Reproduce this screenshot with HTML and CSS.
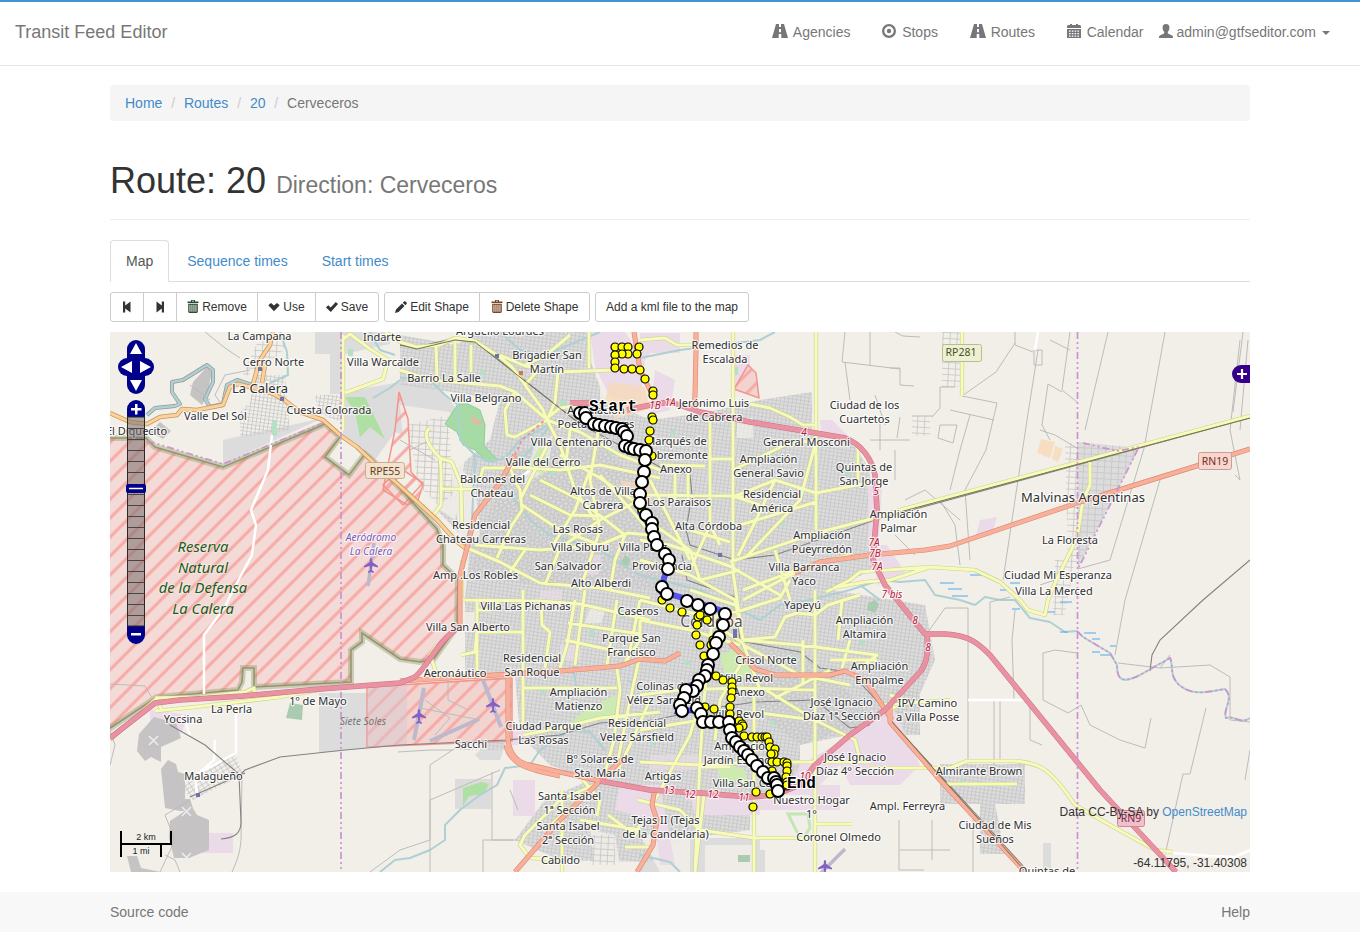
FILE: index.html
```html
<!DOCTYPE html>
<html lang="en">
<head>
<meta charset="utf-8">
<title>Transit Feed Editor</title>
<link rel="stylesheet" href="styles.css">
</head>
<body>
<svg class="sprite" aria-hidden="true">
  <symbol id="i-road" viewBox="0 0 16 14"><path d="M4 0h3v3h2V0h3l4 14H9.300v-4H6.700v4H0zM7 5v3.300h2V5z"/></symbol>
  <symbol id="i-record" viewBox="0 0 14 14"><path fill-rule="evenodd" d="M7 0a7 7 0 1 1 0 14A7 7 0 0 1 7 0zm0 2.300a4.700 4.700 0 1 0 0 9.400 4.700 4.700 0 0 0 0-9.400z"/><circle cx="7" cy="7" r="2.200"/></symbol>
  <symbol id="i-cal" viewBox="0 0 14 14"><path d="M1 1h2V0h2v1h4V0h2v1h2l1 1v2H0V2z"/><path fill-rule="evenodd" d="M0 5h14v9H0zm2 1.500v1.300h1.600V6.500zm2.800 0v1.300h1.600V6.500zm2.800 0v1.300h1.600V6.500zm2.800 0v1.300H12V6.500zM2 9v1.300h1.600V9zm2.800 0v1.300h1.600V9zm2.800 0v1.300h1.600V9zm2.800 0v1.300H12V9zM2 11.500v1.200h1.600v-1.200zm2.800 0v1.200h1.600v-1.200zm2.800 0v1.200h1.600v-1.200zm2.800 0v1.200H12v-1.200z"/></symbol>
  <symbol id="i-user" viewBox="0 0 14 14"><path d="M7 0c2.400 0 3.500 1.600 3.400 3.800C10.300 6 9.500 7.200 8.700 8c0 1.500.5 1.700 2.300 2.400 1.800.8 3 1.200 3 2.400V14H0v-1.200c0-1.200 1.200-1.600 3-2.400C4.800 9.700 5.300 9.500 5.300 8 4.500 7.200 3.700 6 3.600 3.800 3.500 1.600 4.600 0 7 0z"/></symbol>
  <symbol id="i-first" viewBox="0 0 12 12"><path d="M2 0.500h2.200v4L9.500 0.500v11L4.200 7.500v4H2z"/></symbol>
  <symbol id="i-last" viewBox="0 0 12 12"><path d="M10 0.500H7.800v4L2.500 0.500v11l5.300-4v4H10z"/></symbol>
  <symbol id="i-trash" viewBox="0 0 12 13"><path fill-rule="evenodd" d="M4 0h4v1.500h3.500V3H.5V1.500H4zm1 .8v.8h2V.8zM1.200 3.800h9.600V12l-1 1H2.200l-1-1zM2.500 4.800v7h.9v-7zm2 0v7h.9v-7zm2 0v7h.9v-7zm2 0v7h.9v-7z"/></symbol>
  <symbol id="i-down" viewBox="0 0 12 12"><path d="M.3 4.300 3 2l3 2.600L9 2l2.700 2.300L6 10.300z"/></symbol>
  <symbol id="i-ok" viewBox="0 0 12 12"><path d="M0 6.500 2.200 4.200 4.700 6.600 9.800 1 12 3 4.800 11z"/></symbol>
  <symbol id="i-pencil" viewBox="0 0 12 12"><path d="M0 12l1-3.600L7 2.500l2.500 2.500L3.500 11zM7.800 1.700 9 .5c.5-.5 1-.5 1.500 0l1 1c.5.5.5 1 0 1.500l-1.200 1.200z"/></symbol>
</svg>

<nav class="navbar">
  <a class="brand">Transit Feed Editor</a>
  <div class="nav">
    <a><svg class="ico wide"><use href="#i-road"/></svg>Agencies</a>
    <a><svg class="ico"><use href="#i-record"/></svg>Stops</a>
    <a><svg class="ico wide"><use href="#i-road"/></svg>Routes</a>
    <a><svg class="ico"><use href="#i-cal"/></svg>Calendar</a>
    <a class="account"><svg class="ico"><use href="#i-user"/></svg>admin@gtfseditor.com<i class="caret"></i></a>
  </div>
</nav>

<main class="container">
  <ol class="breadcrumb"><li><a>Home</a></li><li><a>Routes</a></li><li><a>20</a></li><li>Cerveceros</li></ol>
  <h1>Route: 20 <small>Direction: Cerveceros</small></h1>
  <ul class="tabs"><li class="active">Map</li><li>Sequence times</li><li>Start times</li></ul>
  <div class="toolbar">
    <div class="group">
      <button class="w34"><svg class="bi"><use href="#i-first"/></svg></button>
      <button class="w34"><svg class="bi"><use href="#i-last"/></svg></button>
      <button class="w82"><svg class="bi trash green"><use href="#i-trash"/></svg>Remove</button>
      <button class="w59"><svg class="bi"><use href="#i-down"/></svg>Use</button>
      <button class="w64"><svg class="bi"><use href="#i-ok"/></svg>Save</button>
    </div>
    <div class="group">
      <button class="w96"><svg class="bi pencil"><use href="#i-pencil"/></svg>Edit Shape</button>
      <button class="w111"><svg class="bi trash orange"><use href="#i-trash"/></svg>Delete Shape</button>
    </div>
    <div class="group"><button class="w154">Add a kml file to the map</button></div>
  </div>

  <div class="map">
    <svg class="canvas" viewBox="110 332 1140 540" width="1140" height="540">
      <defs>
        <pattern id="hatch" width="13.400" height="13.400" patternUnits="userSpaceOnUse" patternTransform="rotate(45)"><path d="M2 0v13.400" stroke="#f7a9a5" stroke-width="3"/></pattern>
        <pattern id="grid" width="4" height="3.600" patternUnits="userSpaceOnUse" patternTransform="rotate(8)"><path d="M0 .5h4M.5 0v3.600" stroke="#c5c5c5" stroke-width=".75"/></pattern>
        <pattern id="grid2" width="5" height="4" patternUnits="userSpaceOnUse" patternTransform="rotate(-32)"><path d="M0 .5h5M.5 0v4" stroke="#c5c5c5" stroke-width=".75"/></pattern>
        <pattern id="grid3" width="7" height="6" patternUnits="userSpaceOnUse" patternTransform="rotate(3)"><path d="M0 .5h7M.5 0v6" stroke="#c5c5c5" stroke-width=".8"/></pattern>
        <marker id="stop" markerUnits="userSpaceOnUse" markerWidth="16" markerHeight="16" refX="8" refY="8"><circle cx="8" cy="8" r="6" fill="#fff" stroke="#000" stroke-width="2"/></marker>
        <marker id="near" markerUnits="userSpaceOnUse" markerWidth="12" markerHeight="12" refX="6" refY="6"><circle cx="6" cy="6" r="4" fill="#ff0" stroke="#000" stroke-width="1.200"/></marker>
        <path id="plane" d="M0-7c1 0 1.200 1 1.200 4L7 1v1.500L1.200 1 .8 5l2 1.500V8L0 7l-2.800 1V6.500l2-1.500L-1.200 1-7 2.500V1l5.800-4C-1.200-6-1-7 0-7z"/>
        <path id="yellow" d="M343 335V430M342 340L350 334 370 349 388 360 383 379 345 393M400 342L417 347 440 345 455 338 475 341 500 357 513 368 525 385 543 410 547 420M385 332L400 342M436 345L437 379M455 342V380M471 345V372M400 370L430 380 500 386 515 392 545 418M547 420L515 437 507 435 505 410 515 392M547 420L555 402 558 372 615 370M500 355L525 366 540 368 525 385M525 365L545 356 570 335M589 332V368M547 420L560 445 575 490 595 520M547 420L580 432 620 455 660 470M547 418L560 408 590 404M430 428C423 432 426 444 440 458 442 470 441 490 441 505L432 517 422 505M440 458L452 462 461 485 462 530M440 489H475M483 468H510L515 480M483 468L480 480M510 467L560 470 600 465 660 478M467 548L500 562 540 583 600 588 650 598M475 545L540 550 600 545 628 533 660 536M497 558L512 525 522 510 520 490 512 475M550 440L530 480 520 500M560 455L600 478 640 505M540 480L580 500 625 535M530 495L570 515 600 516M522 505L560 530 600 545M570 430L565 470M600 420L590 480 600 530 580 590M625 535L615 560 610 590M640 500L600 520 560 548M560 548L545 585M525 550L510 572M590 470L575 510 553 545M600 475L640 520 660 545M463 600L540 601 580 604 650 620M523 590V728M462 560V600M476 610H490L500 600M461 655L475 652 477 630V600M477 670V632H523M437 645L430 655 437 675M541 600L542 625 550 632 545 668M575 600L567 645 560 668M568 623L640 634M565 640L620 652M585 590L575 665M617 600L607 665M640 600L628 660M640 620V640L625 662M523 688H617M617 668L620 690 614 740 603 780M640 655L630 700 618 760M650 700L630 745 618 770M523 735L560 728 600 718 660 712M603 781L560 800 525 835 520 845 530 858 560 860M590 790L545 830M583 780L600 800 597 816M580 820L640 830M562 790V872M608 815L635 835 640 825M625 847H652M638 800L680 810 700 830M695 872L700 760 704 700 712 620M700 700L690 735 655 800M700 767H730M716 717H704M640 695L680 690 740 688 815 690M640 730L700 720 760 713 815 720M640 620L690 630 740 645M640 600L700 615 743 643M640 560L690 575 735 600 743 640M640 540L670 545 735 568M640 515L690 550 700 580M640 495L733 496 750 497M650 480L690 560M660 465L705 466M675 465V500M688 465V500M710 420V525L720 545M733 332V572L743 640M816 332V530M640 340L665 338 677 345 695 345M750 404L770 408 790 417 803 425H816M710 459H733M733 470L785 445 815 440M733 497L775 480 816 493 868 483M738 556L756 520 775 480M747 556L800 500 815 445M740 525L816 502M733 496L760 505M690 530L730 542M730 562L816 533 875 518 900 510 1250 416M690 570L710 525M700 580L740 570M733 568L780 595M743 600L800 570M743 590L810 565 850 555M775 550L790 600M858 450V480M700 620L743 610 780 598 790 580M690 590L735 605M743 640L775 637 785 617 797 613 815 615 828 605 860 595M743 640L800 645 877 655 860 668M743 645L800 675 850 685M743 643L760 690M775 698L830 670M803 640V685M815 590V872M640 762L700 765 754 762 870 762M754 690V872M754 838H815M815 824H852M700 830L754 838M704 795L695 872M815 720L855 740 860 760M766 690L815 720M743 660L720 700 715 740M830 660H877M850 640L842 668M842 600L838 640M833 588L865 582 890 580 930 567 975 570 1000 582 1020 600 1028 610 1045 615 1048 600 1055 583 1077 538 1083 500 1090 485V462M826 592L850 580 860 572 930 567M890 695L905 700 890 710M950 700L880 705M870 768H930L950 768 967 761 1015 761C1040 763 1050 768 1075 805L1110 825 1155 850 1173 852M945 784H1017M962 332V396M155 698L162 710M155 700L110 740M155 711L195 707 280 697 330 688M155 698L200 697 245 692 254 688 255 697"/>
        <path id="orange" d="M110 413L130 422 147 424 160 417 177 415 182 409 197 410 223 405 230 387 238 384 250 387 267 391 283 399 300 412 323 420 340 435 357 447 373 462 400 486 437 520 455 540 465 548M253 384L260 360 270 345 273 332M262 383L265 365 258 362"/>
        <path id="salmon" d="M460 625V575L467 548 475 515 500 483 515 455M634 332L640 370 655 400M696 332V350L695 395 694 412M400 681L480 676 560 671 620 666 640 659 665 661 680 653M508 678V740C510 755 518 763 530 765L560 772 600 781 560 820 515 872M506 745C510 765 530 770 560 776M600 781L612 769 625 757M655 788L652 805 657 820 653 845 637 872M795 573L820 562 870 555 925 550 950 546 1080 502 1190 468 1250 449M730 643L745 658 755 669 775 675 830 675 845 671 865 680 880 702 892 720M890 705V722L940 780 1025 872"/>
        <path id="trunk" d="M110 738L155 703 180 700 243 696 320 689 400 683 415 677C428 665 430 655 447 637L460 625M570 403H590M627 410L655 404 670 402 700 412 750 422 810 432 845 438C862 444 872 460 875 475L877 510 874 545 873 560 885 585 895 597 915 622 925 634 945 634C970 635 980 645 990 655L1100 790 1165 860 1176 872M600 781L650 790 700 793 750 797 775 795 800 785 815 765 850 735 885 710 920 672C928 662 928 650 927 634"/>
        <path id="reserve" d="M100 438H146L155 447 223 467 325 424 340 437 325 457 349 475 365 454 383 470 437 529 443 545V565L458 579 457 627 433 660 420 662 400 659 362 633V642L351 650V682L254 687V668H243L242 682 238 690 157 697 100 735z"/>
      </defs>
      <rect x="110" y="332" width="1140" height="540" fill="#f2efe9"/>

      <!-- built-up areas -->
      <g id="urban" fill="#dcdcdc">
        <path d="M315 332h75v12l-45 10v40h-15v-40h-15zM344 392l56-10 35 0 20 25-15 40-45-15-20 28-32-25zM223 440l100-22-100 46zM319 693h48v55l-48 5z"/>
        <path d="M400 335L455 345 480 332H590V360L605 400 650 420 710 412 760 400 812 392V430L850 440 870 470 872 570 830 590 925 605 935 660 915 705 870 730 800 745 800 790 750 795 750 830 690 838 650 862 560 860 515 840 545 800 590 780 550 765 520 735 515 675 465 673 465 600 470 545 437 510 455 470 490 440 500 400 440 390 400 385z"/>
        <path d="M1077 442L1139 448 1078 568zM700 850h65v22h-65zM940 764h85v40h-30l10 50h-25v-50h-40zM455 779h36v30h-36z"/>
        <path d="M650 838h110v34H640zM890 690h30v45h-30zM480 760h20l10-30h-10l-25 25zM1043 843h8v29h-8z"/>
      </g>
      <g fill="url(#grid)">
        <path d="M400 335L455 345 480 332H590V360L605 400 650 420 710 412 760 400 812 392V430L850 440 870 470 872 570 830 590 925 605 935 660 915 705 870 730 800 745 800 790 750 795 750 830 690 838 650 862 560 860 515 840 545 800 590 780 550 765 520 735 515 675 465 673 465 600 470 545 437 510 455 470 490 440 500 400 440 390 400 385z"/>
        <path d="M315 395h25l3 28-25-10zM255 375h30l5 55-50 7v-25l10-10zM455 750h50v-20M890 690h30v45h-30zM940 764h85v40h-30l10 50h-25v-50h-40z"/>
      </g>
      <path fill="url(#grid2)" d="M520 450L600 440 670 520 660 590 470 580 475 540zM743 640L800 650 880 720 800 745 743 700zM190 775l45-22 8 22-50 25-10-10z"/>
      <path fill="url(#grid3)" d="M1065 445L1077 442 1139 448 1078 568 1068 560zM942 332h20v55h-20zM425 420h25l5 80-15 10-25-50zM1055 560h20l-10 55h-12zM912 416h18v20h-18zM240 380l40-25 10-20-30 2z"/>
      <g fill="#f2efe9">
        <path d="M400 405L450 412 465 460 455 520 425 500 405 460zM600 332H733V400L710 412 650 415 600 400zM460 612h15v20h-15zM640 835h50v37h-30zM450 455l25 30 5 50-20 10zM705 845h48v27h-48zM590 830l25 5 5 30-25 5z" opacity=".85"/>
        <path d="M535 445l18-10-5 35-25 15zM590 608h16l-5 15h-16zM783 798h90v34h-90zM737 418h16v20h-16z" opacity=".7"/>
      </g>
      <path fill="url(#grid3)" d="M408 425l40-10 5 80-15 10-20-20zM590 835h25v30h-25z"/>
      <g fill="#ebdbe8">
        <path d="M590 332h35l20 30-5 40-30-5-15-30zM640 333h40v20h-30l-10 15zM735 355h15v30h-15zM655 370l20 10-5 30-20 5zM872 545h15l20 30-30 10zM820 420h12l20 20-30 0zM868 485h14l-5 80h-8zM980 520l17-3-5 18-17 4zM800 765l70-40 22-20 28 60-20 20h-50l-10-20-30 30h-25zM513 780h22v36h-22zM620 785h40l15 80h-15l-5-45-40-10zM690 795h70v20h-65zM740 800h70v-15h30v25h-80zM195 833h38v20h-40zM150 710l40 5-10 20-30-10zM448 705h20v22h-20zM508 730h22v15h-22z"/>
        <path d="M650 755h50v15h-50zM560 645h20v15h-20zM540 590h22v20h-22zM590 555h12l-4 20h-12z" opacity=".65"/>
      </g>
      <g fill="#f7d9b9"><path d="M610 382l35 5 5 22-35 10-10-20zM1041 439l14 3-5 16-13-5zM1055 446l8 3-5 13-6-3z" opacity=".8"/><path d="M620 480l30 5 2 20-25-5zM720 615l18-5 5 15-20 4z" opacity=".65"/></g>
      <g fill="#c5c3c3"><path d="M193 382L207 367 212 372 207 395 202 405 190 395zM150 432l10-10 11 9-8 8zM139 734l15-17 22 6 5 15-20 9v15l-10-5-6 4-8-10zM161 769l7-9 8 4 2 8 7 2v25h5l4 12h-14l-15-3zM170 821l15-10 6-6 6 10 12 5v30l-20 8h-15l-5-20zM127 856l10 0 4 12 20 4-30 0z"/></g>
      <g fill="#aedfa3"><path d="M345 397l20 0 20 42-15-12-10 10-5-25zM463 788l18-6 8 2-5 10-15 2-6 10z"/></g>
      <path d="M458 404L445 424 457 432 463 445 475 450 488 462 498 460 484 446 485 425 480 410 468 404z" fill="#a6dba6" stroke="#8dcc9a"/>
      <path d="M470 413l5 6 8 3-3 3-8-3z" fill="#e9b6a5"/>
      <g fill="#cdebb0"><path d="M572 721l15-12 25-12 8-4-5 20-20 8-20 2zM720 655l20-8 15 20-5 10-25 0zM715 755l15 10 15 5 5 20-15-10-8 10-8-15zM530 465l10-20 8 15-5 15z"/></g>
      <path d="M788 814l20 0 2 14-8 12-5-8z" fill="none" stroke="#c3e6b4" stroke-width="3"/>
      <g fill="#aacbaf"><path d="M290 703l13 2-1 15-16-2zM738 855h12v7h-12zM625 555l6 5-5 8-6-4zM868 603l7-3 4 5-4 8-8-3z"/></g>
      <g fill="#b5dfc6"><path d="M272 420h5v16h-5zM348 349h5v7h-5zM733 367h5v8h-5zM746 371h8v8h-8zM500 540h6v4h-6zM550 470h6v5h-6zM670 430h5v5h-5zM770 450h5v5h-5zM845 470h5v5h-5zM780 520h5v5h-5zM590 630h5v6h-5zM620 610h4v8h-4zM540 690h6v4h-6zM650 740h5v5h-5zM770 720h5v5h-5zM860 640h5v6h-5zM960 780h5v5h-5zM610 450h5v5h-5zM560 400h5v5h-5zM480 370h5v5h-5zM685 660h5v5h-5zM790 655h6v4h-6z"/></g>

      <!-- reserve and airfield -->
      <use href="#reserve" fill="#f4dad6"/><use href="#reserve" fill="url(#hatch)"/>
      <g class="zone-base"><path d="M367 687L512 678V741L367 747zM748 365l8 8 3 25-25-9z"/></g>
      <g class="zone"><path d="M399 392L408 419 411 472 423 485 418 500 407 505 383 490 395 430z"/><path d="M367 687L512 678V741L367 747z"/><path d="M748 365l8 8 3 25-25-9z"/><path d="M400 468l23 15-20 22-20-20z"/></g>
      <path d="M367 687l40-2v60l-40 2z" fill="#d5c8d0" opacity=".45"/>
      <g fill="none"><use href="#reserve" class="r1"/><use href="#reserve" class="r2"/></g>
      <path d="M424 688L414 740M430 741L479 719M483 680L501 727" stroke="#bdb9cc" stroke-width="4"/><path d="M374 543l-6 43M820 874L845 849" stroke="#bdb9cc" stroke-width="3.500"/>
      <path class="thin" d="M425 700L450 718 435 735M420 708L480 720M448 680v20l20 10"/>

      <!-- water -->
      <g class="loop"><path d="M147 415L155 408 175 406 180 404 172 392V382L183 380 207 365 213 370V382L205 399 210 407 223 404 227 385 237 380 255 386"/><path d="M147 415L155 408 175 406 180 404 172 392V382L183 380 207 365 213 370V382L205 399 210 407 223 404 227 385 237 380 255 386"/></g>
      <g class="water">
        <path d="M280 332L287 352 288 375 270 383M370 332L380 350 395 355M373 398L390 388 400 380 M400 378L430 380 445 395 458 405 460 440 475 455 490 462 505 458 520 440 540 430 555 420 530 450 500 480M475 455L472 520 465 545M500 332L520 350 545 355 600 332M640 358L680 350 720 345 760 340 775 332"/>
        <path d="M500 480L530 520 550 535 600 550 640 575 700 590 740 610 760 620 780 605 810 600 850 590 880 580 900 582 925 580 935 595 960 600 975 605 985 597 1000 600 1015 600 1030 618 1050 622 1065 632 1077 631"/>
        <path d="M860 585l20 15M410 858L430 850 445 840 445 825 460 810 480 795 497 785 505 768 530 765 540 750 570 730 590 732 605 750M380 872L395 860 410 858M628 680L640 690 660 690M640 855L670 862 680 872M573 668L577 690"/>
        <path d="M1077 631L1083 637 1110 653 1117 665C1117 680 1122 684 1140 675L1170 658C1174 665 1168 678 1182 687 1195 697 1215 690 1225 689 1235 698 1222 710 1226 718 1235 715 1240 725 1250 718"/>
      </g>
      <path d="M940 583h14M948 589h14M970 575h14M1000 590h8M952 596h16M1010 583h10M1060 602h12M1012 609h8M1060 632h8M1084 633h12M1092 639h8M1092 652h8M1100 655h10M1110 646h6M1047 612h8" stroke="#4ea8f2"/>

      <!-- minor roads and railways -->
      <g class="thin">
        <path d="M205 332L225 348 240 358M190 385L210 400M222 405L215 395 225 375 250 370M110 730L115 745 110 765M398 752L430 750 452 750M430 872V800L500 770M483 840V872M483 840h30M400 850L430 840V765L460 745M492 772V840h25M510 790l8 20"/>
        <path d="M845 332L842 362 900 369M845 362L850 400M870 332V365M895 332L903 336 920 337M890 368L900 368 900 385 914 386M1015 332V345L1033 352M1038 350L1027 420 1012 520 1003 580M1070 332L1062 390 1077 402M1048 384L1062 392M1048 384L1042 425 1050 440M1108 332L1085 430M1165 332L1145 443M1145 445L1110 560 1078 569M1160 480L1125 600 1115 655M962 396L997 403 986 450 965 490M950 410L994 420M962 396L996 372 1015 343M940 387H955M940 387V408L932 417M912 416H933M900 417L897 438M940 425h17l-4 18-15-5zM970 415L960 450 950 490M940 500L955 525 960 565M905 500L925 490 960 520M965 490L970 560M1034 350h8v15h-8zM1050 340L1070 350M1040 430L1055 435 1077 448M1230 430L1240 480 1235 475M1240 340L1230 430M928 632L945 608H968V760M990 650V602L1010 597M1015 610L1012 640 1014 700M1043 700V653L1055 650 1077 653M1043 700L1068 713 1081 705 1090 725 1120 740 1145 748 1151 718M1030 705V740L1042 745M1118 663L1160 668 1170 655M1160 668L1210 665 1230 677V720L1250 722M1206 708L1190 774H1183L1165 855M994 700V765M1000 700V760M899 820V870h25M900 850h50M932 820v40M973 820V872M160 872L175 840 165 815 190 800"/>
        <path d="M242 775L241 840C240 855 235 865 232 872M165 855L175 860 180 872M110 684L145 686 152 698M370 872L400 850"/>
        <path d="M400 440l35 20M410 450l20-10M1243 332l-10 80M1248 340l-8 90M1250 750L1245 780M875 395l10 30M880 420v30M870 440h40M895 450v30M895 535l20 20M1040 585l30-10"/>
      </g>
      <g class="whiteroad"><path d="M272 435L268 470 251 510 256 525 252 555 233 590 225 607 204 635V694M236 697V753L195 775 197 795M215 740L214 760 197 775M182 715L190 735M968 700H1028M1160 852L1210 856 1235 857 1250 850M1038 332L1035 350M530 470L520 478"/></g>
      <g class="rail"><path d="M170 725L205 745 240 775 245 770 280 757 345 750 400 745 507 740 560 735 600 723 655 720 700 710 755 702 815 700 850 728 870 725M190 797L245 773M239 775L241 822C241 833 235 838 221 839M400 345L417 347 455 338 475 341 580 424 610 440 660 467 690 475 692 495 686 530 690 545 735 560 775 555 875 520 1250 418M682 555L687 580 735 597 740 640 735 645M735 640L800 652 820 668 850 672 890 715 890 720 1025 868M1250 560L1203 600 1160 640 1152 655 1150 671"/></g>

      <!-- classified roads, casing then fill -->
      <g class="road"><use href="#yellow" class="yc"/><use href="#yellow" class="yf"/><use href="#orange" class="oc"/><use href="#orange" class="of"/><use href="#salmon" class="sc"/><use href="#salmon" class="sf"/><use href="#trunk" class="tc"/><use href="#trunk" class="tf"/></g>
      <path d="M515 455L522 440 545 420" stroke="#ee91a0" stroke-width="2" stroke-dasharray="3 3" fill="none"/>
      <path d="M900 512L1250 418M892 722L1024 870M400 345L417 349 455 340 475 342 580 424" stroke="#77744c" stroke-width="1" fill="none"/>
      <g class="border"><path d="M341 332V872M1077.500 332V872"/><path d="M148 441L223 464 323 423M1083 443L1117 451 1139 447 1078 569M1077 631L1083 637 1110 653 1117 665C1117 680 1122 684 1140 675L1170 658C1174 665 1168 678 1182 687 1195 697 1215 690 1225 689 1235 698 1222 710 1226 718 1235 715 1240 725 1250 718"/></g>
      <g fill="#6f74ad"><path d="M258 367h4v4h-4zM280 397h4v4h-4zM196 793h4v4h-4zM495 354h4v4h-4zM718 553h4v4h-4zM733 629h4v9h-4z"/></g>
      <path fill="#cc765e" d="M519 371h4v4h-4z"/>
      <g fill="#8461c4"><use href="#plane" x="371" y="565"/><use href="#plane" x="419" y="716"/><use href="#plane" x="493" y="705"/><use href="#plane" x="825" y="867"/></g>
      <g stroke="#eee" stroke-width="1.500" fill="none"><path d="M149 736l9 9M158 736l-9 9M182 807l9 9M191 807l-9 9M182 853l9 9M191 853l-9 9"/></g>
      <g class="shield"><rect x="365.500" y="462.500" width="39" height="16" rx="2" fill="#f3e2cf" stroke="#c9b091"/><rect x="942.500" y="344.500" width="39" height="17" rx="2" fill="#edf0d4" stroke="#b9bd8c"/><rect x="1198.500" y="452.500" width="33" height="17" rx="2" fill="#f5d7cf" stroke="#d09c90"/><rect x="1117.500" y="810.500" width="27" height="16" rx="2" fill="#edc0ca" stroke="#cf8798"/>
        <text x="385" y="475" fill="#634317">RPE55</text><text x="961" y="356" fill="#4c5320">RP281</text><text x="1215" y="465" fill="#7c2d21">RN19</text><text x="1131" y="822" fill="#7d2943">RN9</text></g>

      <!-- place names -->
      <g class="lbl">
        <text x="259.500" y="339.500">La Campana</text><text x="273.500" y="365.500">Cerro Norte</text><text x="260" y="393" class="town">La Calera</text><text x="215.500" y="419.500">Valle Del Sol</text><text x="329" y="414">Cuesta Colorada</text><text x="136.500" y="435">El Diquecito</text><text x="382" y="341">Indarte</text><text x="383" y="365.500">Villa Warcalde</text><text x="500" y="335">Arguello Lourdes</text><text x="547" y="359">Brigadier San</text><text x="547" y="373">Martín</text><text x="444" y="381.500">Barrio La Salle</text><text x="486" y="401.500">Villa Belgrano</text>
        <text x="596" y="414">Ampliación</text><text x="596" y="428">Poeta Lugones</text><text x="571.500" y="446">Villa Centenario</text><text x="543" y="466">Valle del Cerro</text><text x="492.500" y="483">Balcones del</text><text x="492" y="497">Chateau</text><text x="603" y="495">Altos de Villa</text><text x="603" y="509">Cabrera</text><text x="481" y="528.500">Residencial</text><text x="481" y="542.500">Chateau Carreras</text><text x="578" y="533">Las Rosas</text><text x="580" y="550.500">Villa Siburu</text><text x="643" y="550.500">Villa Páez</text><text x="568" y="570">San Salvador</text><text x="662" y="570">Providencia</text><text x="475.500" y="579">Amp .Los Robles</text><text x="601" y="587">Alto Alberdi</text><text x="525.500" y="610">Villa Las Pichanas</text><text x="638" y="615">Caseros</text><text x="468" y="631">Villa San Alberto</text><text x="631.500" y="642">Parque San</text><text x="631.500" y="656">Francisco</text><text x="532" y="662">Residencial</text><text x="532" y="676">San Roque</text><text x="455" y="677">Aeronáutico</text><text x="578.500" y="696">Ampliación</text><text x="578.500" y="710">Matienzo</text><text x="663" y="690">Colinas de</text><text x="664" y="704">Vélez Sarsfield</text><text x="543.500" y="730">Ciudad Parque</text><text x="543.500" y="744">Las Rosas</text><text x="471" y="748">Sacchi</text><text x="637" y="727">Residencial</text><text x="637" y="741">Velez Sársfield</text><text x="600" y="763">Bº Solares de</text><text x="600" y="777">Sta. María</text><text x="663" y="780">Artigas</text><text x="569.500" y="799.500">Santa Isabel</text><text x="569.500" y="813.500">1ª Sección</text><text x="568" y="830">Santa Isabel</text><text x="568" y="844">2ª Sección</text><text x="560.500" y="863.500">Cabildo</text><text x="665.500" y="824">Tejas II (Tejas</text><text x="665.500" y="838">de la Candelaria)</text>
        <text x="725" y="349">Remedios de</text><text x="725" y="363">Escalada</text><text x="714" y="407">Jerónimo Luis</text><text x="714" y="421">de Cabrera</text><text x="676" y="445">Marqués de</text><text x="676" y="459">Sobremonte</text><text x="676" y="473">Anexo</text><text x="679" y="506">Los Paraisos</text><text x="806.500" y="446">General Mosconi</text><text x="768.500" y="463">Ampliación</text><text x="768.500" y="477">General Savio</text><text x="772" y="498">Residencial</text><text x="772" y="512">América</text><text x="708.500" y="529.500">Alta Córdoba</text><text x="822" y="538.500">Ampliación</text><text x="822" y="552.500">Pueyrredón</text><text x="804" y="571">Villa Barranca</text><text x="804" y="585">Yaco</text><text x="864.500" y="408.500">Ciudad de los</text><text x="864.500" y="422.500">Cuartetos</text><text x="864" y="470.500">Quintas de</text><text x="864" y="484.500">San Jorge</text><text x="898.500" y="518">Ampliación</text><text x="898.500" y="532">Palmar</text><text x="802.500" y="609">Yapeyú</text><text x="864.500" y="624">Ampliación</text><text x="864.500" y="638">Altamira</text><text x="766" y="664">Crisol Norte</text><text x="879.500" y="670">Ampliación</text><text x="879.500" y="684">Empalme</text><text x="747" y="682">Villa Revol</text><text x="749" y="696">Anexo</text><text x="738" y="717.500">Villa Revol</text><text x="841.500" y="706">José Ignacio</text><text x="841.500" y="720">Díaz 1ª Sección</text><text x="743" y="749.500">Ampliación</text><text x="743" y="763.500">Jardín Espinosa</text><text x="855" y="761">José Ignacio</text><text x="855" y="775">Díaz 4° Sección</text><text x="752" y="786.500">Villa San Carlos</text><text x="811.500" y="804">Nuestro Hogar</text><text x="811.500" y="818">1°</text><text x="838.500" y="840.500">Coronel Olmedo</text><text x="907.500" y="810">Ampl. Ferreyra</text><text x="979" y="775">Almirante Brown</text><text x="995" y="828.500">Ciudad de Mis</text><text x="995" y="842.500">Sueños</text><text x="1047" y="875">Quintas de</text><text x="927.500" y="706.500">IPV Camino</text><text x="927.500" y="720.500">a Villa Posse</text><text x="1083" y="502" class="town">Malvinas Argentinas</text><text x="1070" y="544">La Floresta</text><text x="1058" y="579">Ciudad Mi Esperanza</text><text x="1054" y="595">Villa La Merced</text><text x="711.500" y="627" class="city">Córdoba</text>
        <text x="318" y="705">1º de Mayo</text><text x="231.500" y="712.500">La Perla</text><text x="183" y="722.500">Yocsina</text><text x="213.500" y="779.500">Malagueño</text>
      </g>
      <g class="park"><text x="203" y="552">Reserva</text><text x="203" y="572.500">Natural</text><text x="203" y="593">de la Defensa</text><text x="203" y="613.500">La Calera</text></g>
      <g class="aero"><text x="371" y="541">Aeródromo</text><text x="371" y="555">La Calera</text></g><text class="soles" x="363" y="725">Siete Soles</text>
      <g class="exit"><text x="655" y="409">1B</text><text x="670" y="406">1A</text><text x="804" y="436">4</text><text x="876" y="495">5</text><text x="874" y="546">7A</text><text x="875" y="557">7B</text><text x="877" y="570">7A</text><text x="892" y="598">7 bis</text><text x="915" y="624">8</text><text x="928" y="651">8</text><text x="669" y="794">13</text><text x="690" y="798">12</text><text x="713" y="798">12</text><text x="744" y="801">11</text><text x="805" y="780">10</text></g>

      <!-- route overlay -->
      <path d="M580 413L594 424 622 429 627 445 646 451 640 503 640 512 652 529 669 565 664 578 662 592 687 599 725 612 720 640 705 676 686 689 678 711 696 710 703 722H729L732 738 757 765 778 791" fill="none" stroke="#00f" stroke-opacity=".6" stroke-width="6"/>
      <path class="near" d="M615 347L622 347 628 347 639 347 637 354 628 354 622 354 615 355 615 362 615 368 624 369 632 369 640 370 645 379 653 391 653 395 652 417 653 420 650 431 649 440 652 456 642 510 662 600 670 608 682 612 698 617 700 615 707 620 697 625 696 635 700 645 704 656 711 645 713 640 716 676 723 680 732 682 732 687 732 692 731 698 730 707 730 714 705 707 714 709 739 721 742 724 743 726 739 728 744 736 752 737 757 737 762 737 765 737 767 737 769 742 770 747 775 749 774 754 771 754 772 762 777 762 784 762 787 763 787 766 787 771 786 777 787 782 787 786 772 771 770 794 756 792 753 807"/>
      <path class="stops" d="M580 413L585 413 586 418 594 424 599 425 605 426 611 427 616 428 622 429 624 432 627 436 625 446 630 448 634 449 640 450 646 451 645 460 644 472 642 482 640 494 640 503 646 515 652 523 652 529 654 537 657 545 665 554 669 560 668 569 662 587 667 594 687 601 698 605 710 609 725 614 723 625 719 637 716 643 713 654 708 665 707 670 705 676 699 680 697 686 693 691 686 690 684 698 680 705 682 711"/>
      <path class="stops" d="M697 708L701 714 703 722 711 722 719 722 729 722 730 730 732 738 736 742 740 747 744 751 748 755 752 760 757 766 763 772 768 778 774 778 776 782 777 785 778 791"/>
      <circle cx="787" cy="785" r="4" fill="#ff0" stroke="#000"/>
      <g class="ends"><text x="589" y="411">Start</text><text x="787" y="788">End</text></g>

      <!-- pan and zoom control -->
      <g fill="#00008b"><path d="M127 349a9 9 0 0 1 18 0v36a9 9 0 0 1-18 0z"/><rect x="118" y="358" width="36" height="18" rx="9"/><path d="M127 417v-8a9 9 0 0 1 18 0v8zM127 626v9a9 9 0 0 0 18 0v-9z"/></g>
      <g fill="#fff"><path d="M136 343l6 11h-12zM136 391l6-11h-12zM121 367l11-6v12zM151 367l-11-6v12z"/><path d="M131 408h4v-4h2.500v4h4v2.500h-4v4H135v-4h-4zM131 633h10v2.500h-10z"/></g>
      <rect x="127.500" y="417" width="17" height="209" fill="#776c6c" fill-opacity=".55" stroke="#292929"/>
      <path d="M128 428.500h16M128 439.500h16M128 450.500h16M128 461.500h16M128 472.500h16M128 494.500h16M128 505.500h16M128 516.500h16M128 527.500h16M128 538.500h16M128 549.500h16M128 560.500h16M128 571.500h16M128 582.500h16M128 593.500h16M128 604.500h16M128 615.500h16" stroke="#4a4444"/>
      <rect x="126" y="484" width="20" height="9" rx="2" fill="#00008b"/><path d="M129 488.500h14" stroke="#fff" stroke-width="1.500"/>
      <path d="M1250 365h-9a9 9 0 0 0 0 18h9z" fill="#36008b"/><path d="M1237 374h10M1242 369v10" stroke="#fff" stroke-width="2.200"/>
      <path d="M121 831v26M120 844h52M171 831v14M161 844v13" stroke="#000" stroke-width="2"/><g class="scale"><text x="146" y="840">2 km</text><text x="141" y="854">1 mi</text></g>
    </svg>
    <div class="credit">Data CC-By-SA by <a>OpenStreetMap</a></div>
    <div class="coords">-64.11795, -31.40308</div>
  </div>
</main>
<footer><div class="container foot"><a>Source code</a><a>Help</a></div></footer>
</body>
</html>
```
FILE: styles.css
```css
* { box-sizing: border-box; }
body { margin: 0; font: 14px/20px "Liberation Sans", Arial, sans-serif; color: #333; background: #fff; height: 932px; overflow: hidden; }
.sprite { display: none; }
a { color: #428bca; text-decoration: none; }
.navbar { height: 66px; border-top: 2px solid #4192d3; border-bottom: 1px solid #e7e7e7; display: flex; justify-content: space-between; padding: 20px 30px 0 15px; }
.navbar a { color: #777; }
.brand { font-size: 18px; line-height: 20px; }
.nav { display: flex; }
.nav a { display: flex; margin-left: 31.700px; }
.nav a.account { margin-left: 15px; }
.ico { width: 14px; height: 14px; fill: #777; margin: 2px 6px 0 0; }
.ico.wide { width: 16px; margin-right: 5px; }
.account .ico { margin-right: 4px; }
.caret { border: 4px solid transparent; border-top-color: #777; border-bottom: 0; margin: 9px 0 0 6px; height: 4px; }
.container { width: 1140px; margin: 0 auto; }
.breadcrumb { list-style: none; display: flex; margin: 19px 0 0; padding: 8px 15px; height: 36px; background: #f5f5f5; border-radius: 4px; color: #777; }
.breadcrumb li + li::before { content: "/"; color: #ccc; padding: 0 8.850px; }
h1 { font-size: 36px; line-height: 40px; font-weight: 400; margin: 40px 0 20px; height: 59px; border-bottom: 1px solid #eee; }
h1 small { font-size: 23px; color: #777; }
.tabs { list-style: none; display: flex; margin: 0; padding: 0; height: 42px; border-bottom: 1px solid #ddd; color: #428bca; }
.tabs li { padding: 10px 15px; height: 42px; border: 1px solid transparent; margin-right: 2px; }
.tabs .active { color: #555; background: #fff; border-color: #ddd #ddd #fff; border-radius: 4px 4px 0 0; }
.toolbar { display: flex; gap: 5px; margin: 10px 0; }
.group { display: flex; }
button { font: 12px/18px "Liberation Sans", Arial, sans-serif; height: 30px; padding: 0; display: flex; align-items: center; justify-content: center; border: 1px solid #ccc; background: #fff; color: #333; white-space: nowrap; }
button + button { margin-left: -1px; }
button:first-child { border-radius: 3px 0 0 3px; }
button:last-child { border-radius: 0 3px 3px 0; }
button:only-child { border-radius: 3px; }
.w34 { width: 34px; } .w59 { width: 59px; } .w64 { width: 64px; } .w82 { width: 82px; } .w96 { width: 96px; } .w111 { width: 111px; } .w154 { width: 154px; }
.bi { width: 12px; height: 12px; fill: #333; margin-right: 3px; }
.bi.trash { height: 13px; margin-bottom: 2px; }
.bi.green { fill: #2c4a30; }
.bi.orange { fill: #7a4526; }
.w34 .bi { margin: 0; }
.map { position: relative; height: 540px; overflow: hidden; }
.canvas { display: block; }
.zone-base { fill: #f1d3d0; }
.zone path { fill: url(#hatch); stroke: #f5938c; stroke-width: 1.500; }
.r1 { stroke: #90966a; stroke-opacity: .4; stroke-width: 6; }
.r2 { stroke: #7f895a; stroke-opacity: .75; stroke-width: 1.600; }
.loop { fill: none; stroke-linejoin: round; }
.loop path:first-child { stroke: #8d9999; stroke-width: 4; }
.loop path:last-child { stroke: #b2d0d2; stroke-width: 2.600; }
.water { fill: none; stroke: #aed0d2; stroke-width: 2; stroke-linejoin: round; }
.thin { fill: none; stroke: #bcbcbc; stroke-width: 1; }
.whiteroad { fill: none; stroke: #fff; stroke-width: 2.500; }
.rail { fill: none; stroke: #838383; stroke-width: 1.100; }
.road { fill: none; stroke-linejoin: round; }
.yc { stroke: #ccd08f; stroke-width: 4.200; } .yf { stroke: #f6fabb; stroke-width: 3; }
.oc { stroke: #c9955a; stroke-width: 4.500; } .of { stroke: #fbd29c; stroke-width: 3; }
.sc { stroke: #dd8770; stroke-width: 5; } .sf { stroke: #f8b09a; stroke-width: 3.800; }
.tc { stroke: #cf6f86; stroke-width: 5.500; } .tf { stroke: #e892a2; stroke-width: 4.500; }
.border { fill: none; stroke: #cb94d0; stroke-width: 1.700; stroke-dasharray: 7 3 2 3 2 3; }
text { font-family: "Noto Sans", sans-serif; }
.lbl text, .park text, .aero text, .exit text { text-anchor: middle; paint-order: stroke; stroke: #fff; stroke-opacity: .75; stroke-width: 2.400px; stroke-linejoin: round; }
.lbl { font-size: 11px; fill: #303030; }
.lbl .town { font-size: 13px; }
.lbl .city { font-size: 15.500px; fill: #555; }
.shield { font-size: 10.500px; text-anchor: middle; }
.park { font-size: 14.800px; font-style: italic; fill: #1b5e20; }
.park text { stroke-opacity: .3; }
.aero { font-size: 10.200px; font-style: italic; fill: #7b5bbd; }
.soles { font-size: 10px; font-style: italic; fill: #777; text-anchor: middle; }
.exit { font-size: 10px; font-style: italic; fill: #b02240; }
.near { fill: none; marker-start: url(#near); marker-mid: url(#near); marker-end: url(#near); }
.stops { fill: none; marker-start: url(#stop); marker-mid: url(#stop); marker-end: url(#stop); }
.ends text { font: bold 16px "Liberation Mono", monospace; fill: #000; paint-order: stroke; stroke: #fff; stroke-width: 2px; }
.scale text { font: 9px "Liberation Sans", sans-serif; text-anchor: middle; fill: #222; }
.credit, .coords { position: absolute; right: 3px; font-size: 12px; line-height: 17px; }
.credit { bottom: 51px; }
.coords { bottom: 0; }
footer { background: #f8f8f8; height: 40px; margin-top: 20px; }
.foot { display: flex; justify-content: space-between; padding-top: 10px; }
.foot a { color: #777; }
```
